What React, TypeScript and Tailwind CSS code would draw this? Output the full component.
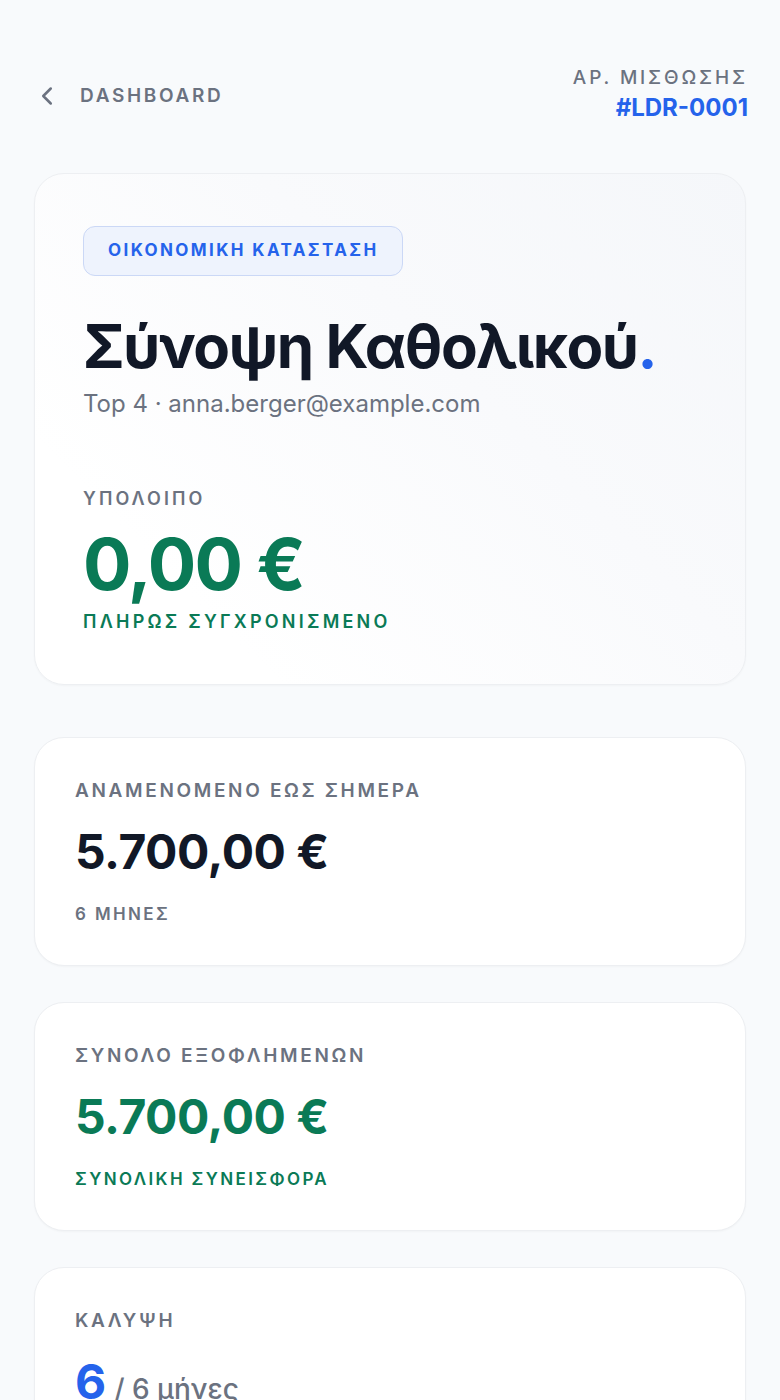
import { ChevronLeft } from 'lucide-react';

const font = { fontFamily: 'Inter, "Noto Sans", sans-serif' };

const card =
  'rounded-[30px] border border-[#edeff2] bg-white px-[40px] pb-[39px] pt-[41px] shadow-[0_1px_2px_rgba(15,23,42,0.03)]';

function StatCard({
  label,
  value,
  note,
  tone,
}: {
  label: string;
  value: string;
  note: string;
  tone: 'dark' | 'green';
}) {
  const valueColor = tone === 'green' ? 'text-[#0a7a56]' : 'text-[#111827]';
  const noteColor = tone === 'green' ? 'text-[#0a7a56]' : 'text-[#6b7280]';
  return (
    <div className={card}>
      <div className="text-[19px] font-semibold uppercase leading-6 tracking-[0.14em] text-[#6b7280]">
        {label}
      </div>
      <div className={`mt-[21px] text-[48px] font-bold leading-[56px] tracking-[-0.01em] ${valueColor}`}>
        {value}
      </div>
      <div className={`mt-[22px] text-[17px] font-semibold uppercase leading-6 tracking-[0.14em] ${noteColor}`}>
        {note}
      </div>
    </div>
  );
}

export default function App() {
  return (
    <main className="min-h-screen bg-[#f8fafc] px-[34px] pb-20 pt-[66px]" style={font}>
      <header className="flex items-start justify-between">
        <a href="#" className="-ml-[2px] mt-[15px] flex items-center gap-[18px] text-[#6b7280]">
          <ChevronLeft className="h-[30px] w-[30px]" strokeWidth={2} />
          <span className="text-[19px] font-semibold uppercase leading-6 tracking-[0.14em]">Dashboard</span>
        </a>
        <div className="-mr-[2px] text-right">
          <div className="text-[19px] font-medium uppercase leading-6 tracking-[0.15em] text-[#6b7280]">
            Αρ. Μισθωσης
          </div>
          <div className="mt-[4px] text-[24px] font-bold leading-7 text-[#2563eb]">#LDR-0001</div>
        </div>
      </header>

      <section className="mt-[51px] rounded-[30px] border border-[#edeff2] bg-[linear-gradient(225deg,#f5f7fa_0%,#f9fafc_40%,#ffffff_80%)] px-[48px] pb-[50px] pt-[52px] shadow-[0_1px_2px_rgba(15,23,42,0.03)]">
        <span className="inline-flex h-[50px] items-center rounded-[12px] border border-[#cbd8f6] bg-[#eef3fd] px-[24px] text-[17px] font-bold uppercase tracking-[0.14em] text-[#2563eb]">
          Οικονομικη Κατασταση
        </span>
        <h1 className="mt-[34px] whitespace-nowrap text-[60px] font-bold leading-[72px] tracking-[-0.025em] text-[#111827]">
          Σύνοψη Καθολικού<span className="text-[#2563eb]">.</span>
        </h1>
        <p className="mt-[6px] text-[24px] leading-8 text-[#6b7280]">Top 4 · anna.berger@example.com</p>

        <div className="mt-[67px] text-[18px] font-semibold uppercase leading-6 tracking-[0.17em] text-[#6b7280]">
          Υπολοιπο
        </div>
        <div className="mt-[13px] text-[72px] font-bold leading-[80px] tracking-[-0.025em] text-[#0a7a56]">
          0,00 €
        </div>
        <div className="mt-[6px] text-[18px] font-semibold uppercase leading-6 tracking-[0.18em] text-[#0a7a56]">
          Πληρως Συγχρονισμενο
        </div>
      </section>

      <div className="mt-[52px] flex flex-col gap-[36px]">
        <StatCard label="Αναμενομενο εως σημερα" value="5.700,00 €" note="6 Μηνες" tone="dark" />
        <StatCard label="Συνολο εξοφλημενων" value="5.700,00 €" note="Συνολικη Συνεισφορα" tone="green" />
        <div className={card}>
          <div className="text-[19px] font-semibold uppercase leading-6 tracking-[0.14em] text-[#6b7280]">
            Καλυψη
          </div>
          <div className="mt-[21px] flex items-baseline gap-[8px]">
            <span className="text-[48px] font-bold leading-[56px] text-[#2563eb]">6</span>
            <span className="text-[28px] font-medium text-[#6b7280]">/ 6 μήνες</span>
          </div>
          <div className="mt-[22px] h-6" />
        </div>
      </div>
    </main>
  );
}
